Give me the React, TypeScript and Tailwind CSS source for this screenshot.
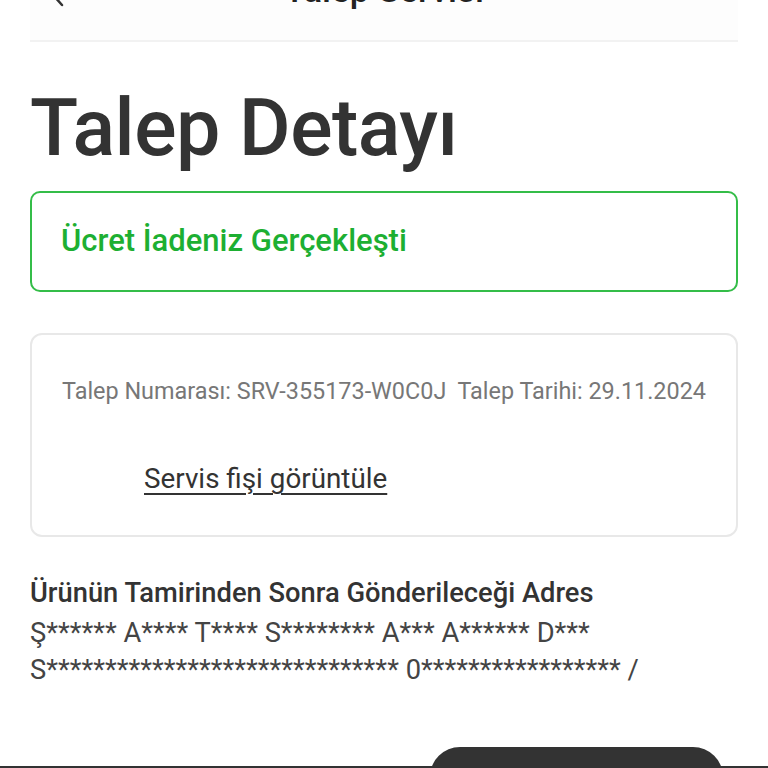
import React from "react";

export default function App() {
  return (
    <div className="w-[768px] h-[768px] overflow-hidden bg-white relative" style={{ fontFamily: "Roboto, 'Liberation Sans', sans-serif" }}>
      <div className="px-[30px]">
        <div className="h-[42px] relative flex items-start justify-center border-b-2 border-[#f2f2f2] bg-[#fdfdfd]">
          <svg className="absolute left-[20px] top-[-15px]" width="16" height="22" viewBox="0 0 16 22" fill="none">
            <path d="M12 2 L4 11 L12 20" stroke="#333" strokeWidth="2.5" strokeLinecap="round" strokeLinejoin="round" />
          </svg>
          <div className="-mt-[27px] text-[35px] leading-[35px] font-medium text-[#222]">Talep Servisi</div>
        </div>

        <h1 className="mt-[47px] text-[79px] leading-[79px] font-medium text-[#333] tracking-[-0.5px]">Talep Detayı</h1>

        <div className="mt-[23px] h-[101px] rounded-[10px] border-2 border-[#34bd48] flex items-center px-[29px]">
          <span className="text-[31px] font-medium text-[#1daf32]">Ücret İadeniz Gerçekleşti</span>
        </div>

        <div className="mt-[41px] h-[204px] rounded-[12px] border-2 border-[#e8e8e8] pl-[30px] pt-[41px]">
          <div className="text-[23.4px] leading-[30px] text-[#777] whitespace-pre">Talep Numarası: SRV-355173-W0C0J  Talep Tarihi: 29.11.2024</div>
          <div className="mt-[58px] ml-[82px] text-[27.8px] leading-[30px] text-[#333] underline underline-offset-[5px] decoration-[1.5px]">Servis fişi görüntüle</div>
        </div>

        <div className="mt-[36px] text-[27.3px] leading-[40px] font-medium text-[#333]">Ürünün Tamirinden Sonra Gönderileceği Adres</div>
        <div className="text-[27.3px] leading-[40px] text-[#444]">Ş****** A**** T**** S******** A*** A****** D***</div>
        <div className="text-[27.3px] leading-[34px] text-[#444]">S****************************** 0***************** /</div>
      </div>

      <div className="absolute left-0 right-0 bottom-0 h-[2px] bg-[#333]" />
      <div className="absolute left-[430px] w-[293px] top-[747px] h-[60px] rounded-[30px] bg-[#333]" />
    </div>
  );
}
